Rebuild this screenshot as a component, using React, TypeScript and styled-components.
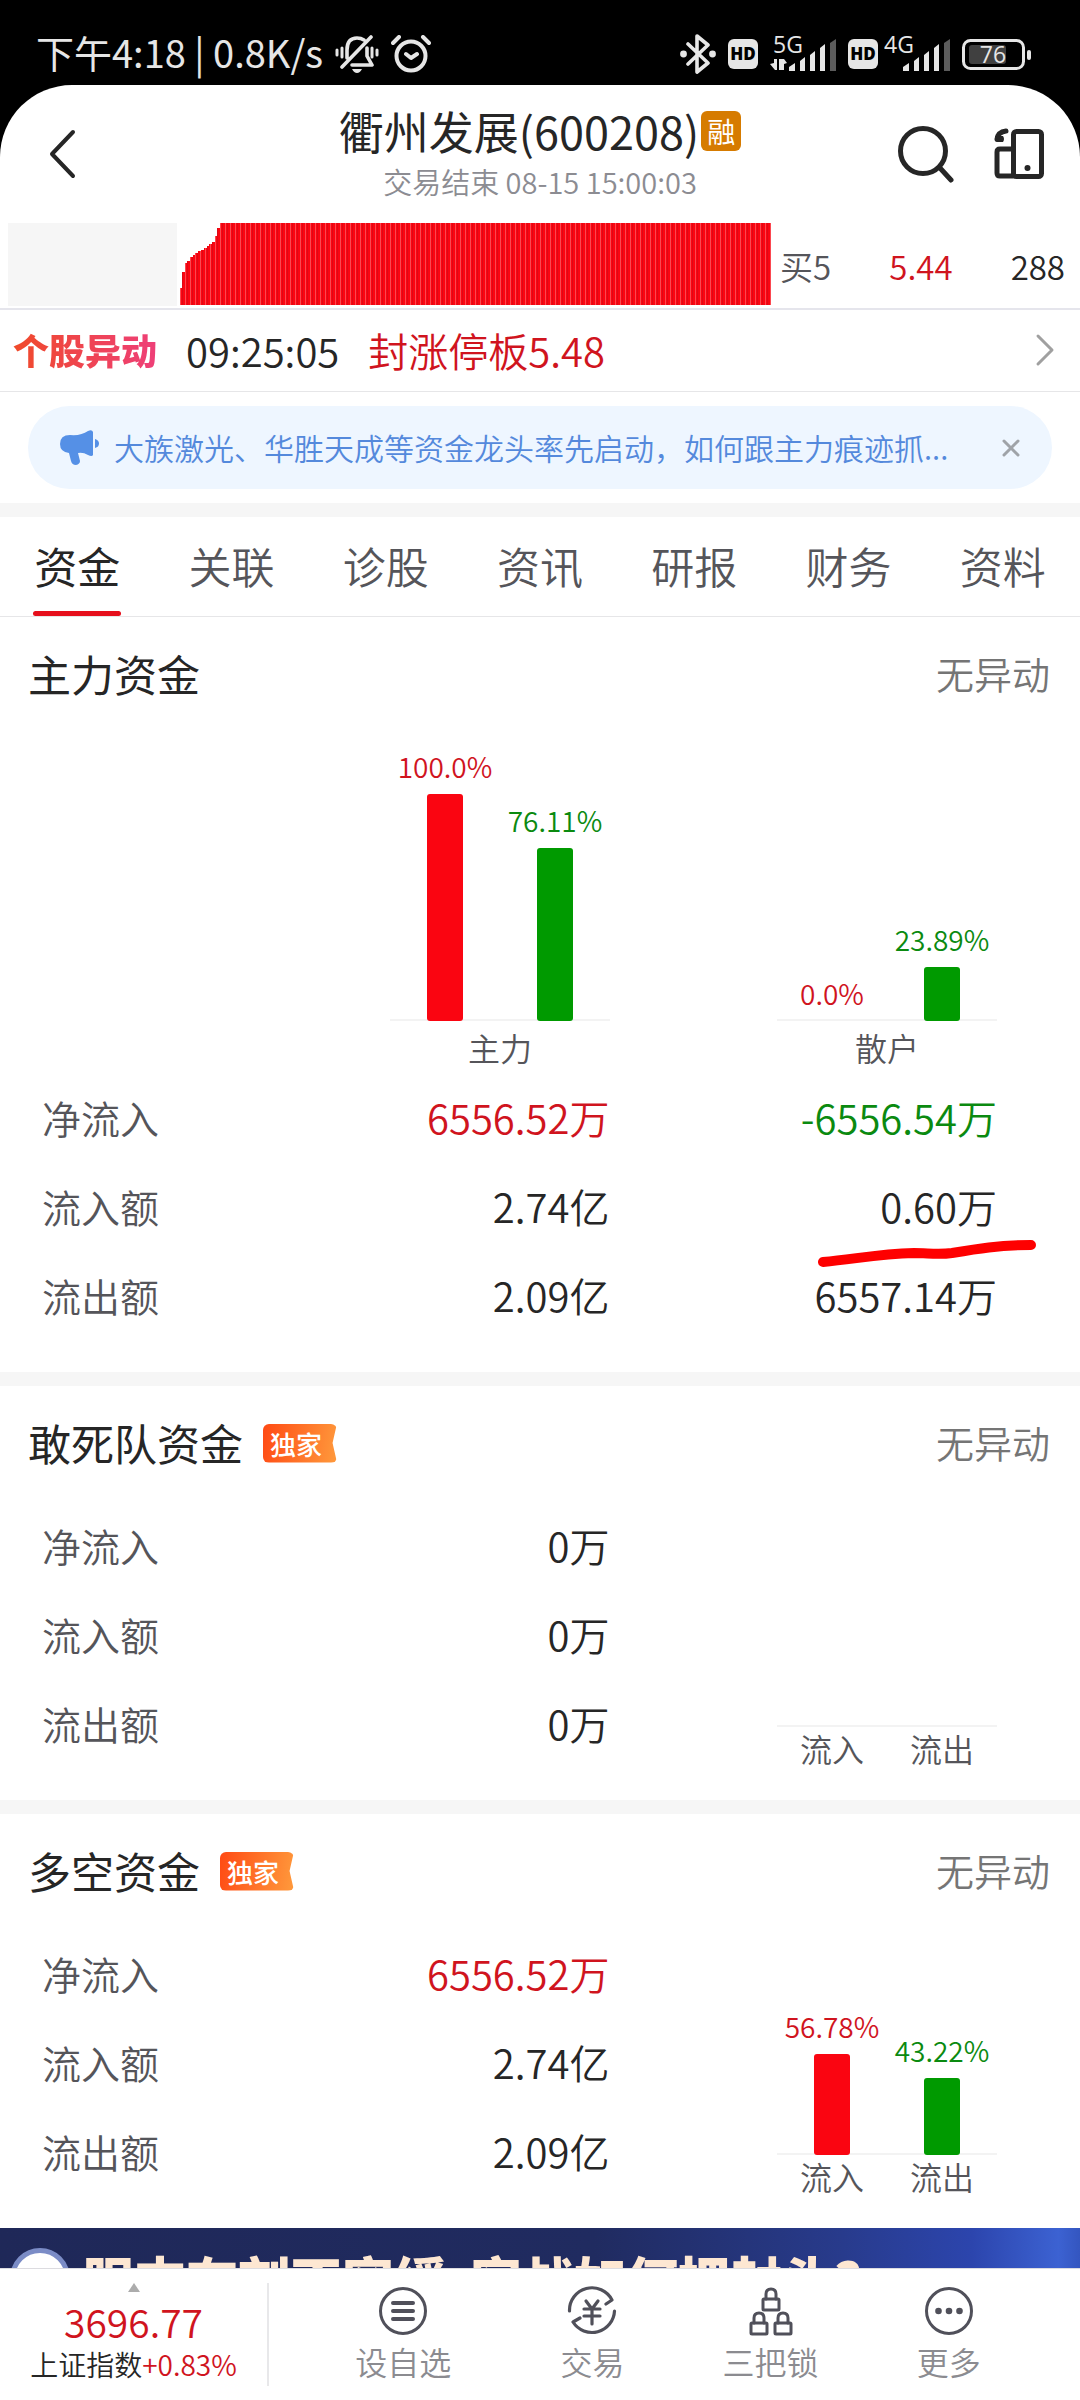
import React from 'react';

import styled, { createGlobalStyle } from 'styled-components';

const GlobalStyle = createGlobalStyle`
	* {
		box-sizing: border-box;
	}

	body {
		margin: 0;
		background: #000;
		color: #262626;
		font-family: 'Noto Sans CJK SC', 'Open Sans', sans-serif;
		font-weight: 350;
		line-height: 1.4;
	}

	button {
		padding: 0;
		border: 0;
		background: none;
		color: inherit;
		font: inherit;
		cursor: pointer;
	}

	svg {
		display: block;
		flex-shrink: 0;
	}
`;

type Tone = 'up' | 'down' | 'plain';

const tones: Record<Tone, string> = {
	up: '#d0141e',
	down: '#0b8a10',
	plain: '#262626',
};

// Layout
const Screen = styled.div`
	display: flex;
	flex-direction: column;
	height: 100vh;
`;

const Sheet = styled.div`
	flex: 1;
	min-height: 0;
	display: flex;
	flex-direction: column;
	overflow: hidden;
	border-radius: 72px 72px 0 0;
	background: #fff;
`;

const Scroll = styled.main`
	flex: 1;
	min-height: 0;
	overflow-y: auto;
	scrollbar-width: none;
`;

// Status bar
const StatusBar = styled.div`
	display: flex;
	align-items: center;
	height: 85px;
	padding: 22px 48px 0 36px;
	color: #e6e6e6;
	font-size: 38px;
	font-weight: 400;
	line-height: 48px;
	white-space: nowrap;
`;

const Clock = styled.span`
	padding-bottom: 4px;
`;

const StatusGroup = styled.div<{ $gap: number }>`
	display: flex;
	align-items: center;
	gap: ${p => p.$gap}px;
`;

const Spacer = styled.div`
	flex-grow: 1;
`;

const Hd = styled.span`
	width: 30px;
	border-radius: 6px;
	background: #e6e6e6;
	color: #000;
	font-family: 'Open Sans', sans-serif;
	font-size: 17px;
	font-weight: 800;
	line-height: 30px;
	text-align: center;
`;

// Title bar
const Header = styled.header`
	display: flex;
	align-items: center;
	justify-content: space-between;
	height: 138px;
	flex-shrink: 0;
	padding: 0 36px;
`;

const HeaderSide = styled.div<{ $end?: boolean }>`
	display: flex;
	justify-content: ${p => (p.$end ? 'flex-end' : 'flex-start')};
	gap: 40px;
	width: 160px;
`;

const Heading = styled.div`
	padding-top: 4px;
	text-align: center;
	white-space: nowrap;
`;

const Title = styled.h1`
	display: flex;
	align-items: center;
	justify-content: center;
	gap: 2px;
	margin: 0;
	font-size: 45px;
	font-weight: 400;
	line-height: 50px;
`;

const MarginTag = styled.span`
	width: 40px;
	border-radius: 6px;
	background: #d67b00;
	color: #fff;
	font-size: 28px;
	line-height: 40px;
	text-align: center;
`;

const Session = styled.div`
	color: #8c8c92;
	font-size: 29px;
	line-height: 50px;
`;

// Order book strip
const Quote = styled.div`
	display: flex;
	align-items: flex-start;
	height: 87px;
	flex-shrink: 0;
	padding-left: 8px;
	border-bottom: 2px solid #e5e5ec;
`;

const Asks = styled.div`
	flex: 169 0 0;
	height: 83px;
	margin-right: 3px;
	background: #f6f6f6;
`;

const Depth = styled.div`
	flex: 591 0 0;
`;

const BidRow = styled.div`
	flex: 285 0 0;
	display: flex;
	justify-content: space-between;
	padding: 0 15px 0 9px;
	font-size: 33px;
	line-height: 87px;
`;

const Muted = styled.span`
	color: #55555a;
`;

const Amount = styled.span<{ $tone: Tone }>`
	color: ${p => tones[p.$tone]};
`;

// Alert line
const Alert = styled.a`
	display: flex;
	align-items: center;
	gap: 29px;
	height: 82px;
	flex-shrink: 0;
	padding: 0 25px 2px 13px;
	border-bottom: 1px solid #e6e6e8;
	color: inherit;
	font-size: 40px;
	text-decoration: none;
`;

const AlertName = styled.b`
	background: linear-gradient(90deg, #f04a2a, #ee3f78);
	background-clip: text;
	color: transparent;
	font-size: 36px;
	font-weight: 900;
`;

const NoticeWrap = styled.div`
	padding: 14px 28px;
	border-bottom: 14px solid #f6f6f6;
	flex-shrink: 0;
`;

const Notice = styled.div`
	display: flex;
	align-items: center;
	height: 83px;
	padding: 0 32px;
	border-radius: 42px;
	background: #eef6ff;
	color: #5489dc;
	font-size: 30px;
`;

const NoticeText = styled.span`
	flex: 1;
	margin: 0 40px 0 14px;
	padding-bottom: 2px;
	overflow: hidden;
	text-overflow: ellipsis;
	white-space: nowrap;
`;

// Tabs
const Tabs = styled.nav`
	display: flex;
	height: 100px;
	flex-shrink: 0;
	border-bottom: 1px solid #e6e6e8;
`;

const Tab = styled.button<{ $active?: boolean }>`
	flex: 1;
	display: flex;
	flex-direction: column;
	align-items: center;
	color: ${p => (p.$active ? '#262626' : '#55555a')};
	font-size: 43px;
	font-weight: ${p => (p.$active ? 400 : 350)};
	line-height: 96px;

	&::after {
		content: '';
		width: 88px;
		height: 5px;
		margin-top: -2px;
		border-radius: 3px;
		background: ${p => (p.$active ? '#e60f1c' : 'transparent')};
	}
`;

// Sections
const Section = styled.section`
	padding-bottom: 31px;

	& + & {
		border-top: 14px solid #f6f6f6;
	}
`;

const SectionHead = styled.div`
	display: flex;
	align-items: center;
	height: 116px;
	padding: 0 30px 4px 28px;
`;

const SectionTitle = styled.h2`
	margin: 0;
	font-size: 43px;
	font-weight: 400;
`;

const Exclusive = styled.span`
	width: 74px;
	margin: 2px 0 0 20px;
	padding-left: 7px;
	border-radius: 6px;
	background: linear-gradient(100deg, #ff4a14, #ff9a3c);
	clip-path: polygon(0 0, 100% 0, 94% 50%, 100% 100%, 0 100%);
	color: #fff;
	font-size: 26px;
	font-weight: 500;
	line-height: 39px;
`;

const State = styled.span`
	margin-left: auto;
	color: #757575;
	font-size: 38px;
`;

const ChartRow = styled.div`
	display: grid;
	grid-template-columns: 180px 1fr 1fr;
	align-items: end;
	justify-items: end;
	height: 341px;
	padding: 0 83px 0 43px;
`;

const Plot = styled.div`
	width: 220px;
	margin-left: auto;
	color: #55555a;
	font-size: 32px;
	text-align: center;
`;

const Bars = styled.div`
	display: grid;
	grid-template-columns: 1fr 1fr;
	align-items: end;
	background: linear-gradient(#f3f3f3, #f3f3f3) bottom / 100% 2px no-repeat;
	min-height: 2px;
`;

const BarSlot = styled.div<{ $tone: Tone }>`
	display: flex;
	flex-direction: column;
	align-items: center;
	gap: 10px;
	color: ${p => tones[p.$tone]};
	font-size: 28px;
	line-height: 36px;
`;

const Bar = styled.div<{ $tone: Tone }>`
	width: 36px;
	border-radius: 3px;
	background: ${p => (p.$tone === 'up' ? '#fa0511' : '#009a00')};
`;

const PlotNames = styled.div<{ $height: number }>`
	display: flex;
	line-height: ${p => p.$height}px;

	span {
		flex: 1;
	}
`;

const TableWrap = styled.div`
	padding: 0 83px 0 42px;
`;

const Table = styled.table`
	width: 100%;
	table-layout: fixed;
	border-collapse: collapse;
	line-height: 52px;

	th {
		width: 180px;
		color: #55555a;
		font-size: 39px;
		font-weight: 350;
		text-align: left;
		white-space: nowrap;
	}

	th,
	td {
		height: 89px;
		padding: 0 0 4px;
	}
`;

const Cell = styled.td<{ $tone: Tone }>`
	position: relative;
	color: ${p => tones[p.$tone]};
	font-size: 40px;
	text-align: right;
`;

const PlotCell = styled.td`
	&& {
		padding: 0;
	}

	vertical-align: bottom;
`;

// Hand-drawn marker under a value
const Marker = styled.svg`
	position: absolute;
	right: -41px;
	bottom: -17px;
`;

// Banner
const Banner = styled.a`
	display: flex;
	align-items: flex-start;
	gap: 24px;
	height: 160px;
	padding: 20px 10px;
	overflow: hidden;
	background: linear-gradient(90deg, #1f2858 0%, #202b60 55%, #283b8c 78%, #2c45ad 90%, #3c62d2 98%, #3456c0 100%);
	color: #fde7d2;
	font-size: 52px;
	font-weight: 900;
	line-height: 62px;
	text-decoration: none;
	white-space: nowrap;
`;

const Avatar = styled.span`
	width: 60px;
	height: 60px;
	flex-shrink: 0;
	margin-right: -12px;
	border: 5px solid #7b8cc6;
	border-radius: 50%;
	background: #fff;
`;

// Bottom bar
const BottomBar = styled.footer`
	display: flex;
	align-items: center;
	height: 132px;
	flex-shrink: 0;
	border-top: 1px solid #dcdce0;
	background: #fff;
`;

const Index = styled.button`
	display: flex;
	flex-direction: column;
	align-items: center;
	width: 269px;
	height: 103px;
	border-right: 2px solid #e8e8ea;
	white-space: nowrap;
`;

const IndexValue = styled.span`
	margin-top: 7px;
	color: ${tones.up};
	font-size: 39px;
	line-height: 44px;
`;

const IndexName = styled.span`
	font-size: 28px;
	line-height: 42px;
`;

const Actions = styled.nav`
	flex: 1;
	display: grid;
	grid-template-columns: 200fr repeat(3, 178fr);
	padding: 0 42px 0 34px;
`;

const Action = styled.button`
	display: flex;
	flex-direction: column;
	align-items: center;
	gap: 3px;
	color: #8b8b90;
	font-size: 32px;
	line-height: 44px;

	svg {
		color: #50505a;
	}
`;

const Line = (props: React.SVGProps<SVGSVGElement>) => (
	<svg fill="none" stroke="currentColor" strokeLinecap="round" strokeLinejoin="round" aria-hidden="true" {...props} />
);

const MutedBell = () => (
	<Line width="44" height="38" viewBox="0 0 44 38" strokeWidth="3.6">
		<path d="M12 23V15Q12 3 22 3Q26 3 29 5M32 13v8l5 9H17M36 2L7 32" />
		<path d="M7 13v9M37 13v9" strokeWidth="3" />
		<path d="M2 15v5M42 15v5" strokeWidth="3" />
		<path d="M17 34h10q-2 4-5 4t-5-4z" fill="currentColor" stroke="none" />
	</Line>
);

const Alarm = () => (
	<Line width="40" height="38" viewBox="0 0 40 38" strokeWidth="4">
		<circle cx="20" cy="21" r="14.5" />
		<path d="M15 19l5 4 6-4M2 8l6-6M38 8l-6-6" />
	</Line>
);

const Bluetooth = () => (
	<Line width="36" height="40" viewBox="0 0 36 40" strokeWidth="3.6">
		<path d="M8 10l20 19-11 9V2l11 9L8 30" />
		<circle cx="3.5" cy="20" r="3.4" fill="currentColor" stroke="none" />
		<circle cx="32.5" cy="20" r="3.4" fill="currentColor" stroke="none" />
	</Line>
);

const Signal = ({ label, data }: { label: string; data?: boolean }) => (
	<svg width="66" height="54" viewBox="0 -8 66 54" fill="currentColor" aria-hidden="true">
		<text x={data ? 3 : 0} y="18" fontSize="23" fontFamily="Open Sans">{label}</text>
		{data && <path d="M0 29l4-1v-4h3v11H5zM9 24h3v11H9zM12 24h2l3 4-3 1v6h-2z" />}
		<path d="M19 32l6-4v8h-6zM30 26l5-4v14h-5zM40 20l5-4v20h-5zM50 13l5-4v27h-5z" />
		<path d="M60 8l6-4v32h-6z" opacity=".4" />
	</svg>
);

const Battery = () => (
	<svg width="70" height="32" viewBox="0 0 70 32" fill="currentColor" aria-hidden="true">
		<rect x="1.500" y="2.500" width="60" height="28" rx="7" fill="none" stroke="currentColor" strokeWidth="3" />
		<rect x="7" y="7" width="37" height="19" rx="3" opacity=".28" />
		<rect x="65" y="12" width="4" height="10" rx="2" />
		<text x="31" y="25" fontSize="23" textAnchor="middle" fontFamily="Open Sans">76</text>
	</svg>
);

const BackIcon = () => (
	<Line width="56" height="56" viewBox="0 0 56 56" strokeWidth="4">
		<path d="M37 6L16 28l21 22" />
	</Line>
);

const SearchIcon = () => (
	<Line width="56" height="58" viewBox="0 0 56 58" strokeWidth="5">
		<circle cx="25" cy="26" r="22.500" />
		<path d="M42 43l11 12" />
	</Line>
);

const RotateIcon = () => (
	<Line width="50" height="54" viewBox="0 0 50 54" strokeWidth="5">
		<rect x="19.500" y="4.500" width="28" height="45" rx="3" />
		<path d="M19 22H6q-3 0-3 3v21q0 3 3 3h13" />
		<path d="M3 12Q4 5 12 4" />
		<path d="M1 9v4q0 2 2 2h6q2-3 0-6z" fill="currentColor" stroke="none" />
		<circle cx="33.500" cy="41" r="3" fill="currentColor" stroke="none" />
	</Line>
);

const Megaphone = () => (
	<svg width="40" height="36" viewBox="0 0 40 36" fill="#5590e6" aria-hidden="true">
		<path d="M10 5q11 1 18-4 4-2 5 1v23q-1 2-5 0-5-3-10-2l2 8q0 3-4 4-4 0-5-4l-2-8Q0 22 0 14 0 5 10 5z" />
		<path d="M35 9q4 1 4 4.500t-4 4.500z" />
	</svg>
);

const DepthChart = () => (
	<svg width="100%" height="82" viewBox="0 0 591 82" preserveAspectRatio="none" aria-hidden="true">
		<defs>
			<pattern id="bids" width="5" height="82" patternUnits="userSpaceOnUse">
				<rect width="5" height="82" fill="#fb0511" />
				<rect width="1" height="82" fill="#fb4850" />
				<rect x="2" width="1" height="82" fill="#dc0a16" />
			</pattern>
		</defs>
		<path
			fill="url(#bids)"
			d="M0 82V65h2V49h3v-9h2v-2h3v-4h3v-2h2v-2h3v-2h3v-1h3v-2h3v-2h2v-2h3v-2h3v-6h2V5h3V0H591V82z"
		/>
	</svg>
);

const ListIcon = () => (
	<Line width="50" height="50" viewBox="0 0 50 50" strokeWidth="3">
		<circle cx="25" cy="25" r="22.500" />
		<path d="M15 17h20M15 25h20M15 33h20" strokeWidth="4" />
	</Line>
);

const TradeIcon = () => (
	<Line width="50" height="50" viewBox="0 0 50 50" strokeWidth="3.200">
		<path d="M2.500 25A22.500 22.500 0 0 1 45 14l-6 4M47.500 25A22.500 22.500 0 0 1 6 36l7-4" />
		<path d="M19 15l6 8 6-8M17 23h16M17 30h16M25 23v15" />
	</Line>
);

const LocksIcon = () => (
	<Line width="50" height="50" viewBox="0 0 50 50" strokeWidth="3">
		<rect x="17" y="13" width="16" height="11" rx="1" />
		<path d="M20 13V8q0-5 5-5t5 5v5" />
		<rect x="5" y="37" width="16" height="11" rx="1" />
		<path d="M8 37v-5q0-5 5-5t5 5v5" />
		<rect x="29" y="37" width="16" height="11" rx="1" />
		<path d="M32 37v-5q0-5 5-5t5 5v5" />
	</Line>
);

const MoreIcon = () => (
	<Line width="50" height="50" viewBox="0 0 50 50" strokeWidth="3">
		<circle cx="25" cy="25" r="22.500" />
		<g fill="currentColor" stroke="none">
			<circle cx="14.500" cy="25" r="3.300" />
			<circle cx="25" cy="25" r="3.300" />
			<circle cx="35.500" cy="25" r="3.300" />
		</g>
	</Line>
);

interface PlotBar {
	tone: Tone;
	percent: string;
	height: number;
}

interface FlowPlotProps {
	bars: PlotBar[];
	names: string[];
	nameHeight: number;
}

const FlowPlot = ({ bars, names, nameHeight }: FlowPlotProps) => (
	<Plot>
		<Bars>
			{bars.map(bar => (
				<BarSlot key={bar.tone} $tone={bar.tone}>
					{bar.percent}
					<Bar $tone={bar.tone} style={{ height: bar.height }} />
				</BarSlot>
			))}
		</Bars>
		<PlotNames $height={nameHeight}>
			{names.map(name => (
				<span key={name}>{name}</span>
			))}
		</PlotNames>
	</Plot>
);

interface FlowRow {
	name: string;
	values: [string, Tone][];
	marked?: boolean;
}

const FlowTable = ({ rows, children }: { rows: FlowRow[]; children?: React.ReactNode }) => (
	<TableWrap>
		<Table>
			<tbody>
				{rows.map((row, i) => (
					<tr key={row.name}>
						<th scope="row">{row.name}</th>
						{row.values.map(([value, tone], col) => (
							<Cell key={col} $tone={tone}>
								{value}
								{row.marked && col === 1 && (
									<Marker width="222" height="32" viewBox="0 0 222 32" aria-hidden="true">
										<path
											d="M7 25C40 22 62 17 98 16C112 16 122 18 136 16C160 12 184 8 215 8"
											fill="none"
											stroke="#fe0000"
											strokeWidth="10"
											strokeLinecap="round"
										/>
									</Marker>
								)}
							</Cell>
						))}
						{i === 0 && children && <PlotCell rowSpan={rows.length}>{children}</PlotCell>}
					</tr>
				))}
			</tbody>
		</Table>
	</TableWrap>
);

const tabs = ['资金', '关联', '诊股', '资讯', '研报', '财务', '资料'];

const mainRows: FlowRow[] = [
	{ name: '净流入', values: [['6556.52万', 'up'], ['-6556.54万', 'down']] },
	{ name: '流入额', values: [['2.74亿', 'plain'], ['0.60万', 'plain']], marked: true },
	{ name: '流出额', values: [['2.09亿', 'plain'], ['6557.14万', 'plain']] },
];

const squadRows: FlowRow[] = [
	{ name: '净流入', values: [['0万', 'plain']] },
	{ name: '流入额', values: [['0万', 'plain']] },
	{ name: '流出额', values: [['0万', 'plain']] },
];

const longShortRows: FlowRow[] = [
	{ name: '净流入', values: [['6556.52万', 'up']] },
	{ name: '流入额', values: [['2.74亿', 'plain']] },
	{ name: '流出额', values: [['2.09亿', 'plain']] },
];

const actions = [
	{ name: '设自选', icon: <ListIcon /> },
	{ name: '交易', icon: <TradeIcon /> },
	{ name: '三把锁', icon: <LocksIcon /> },
	{ name: '更多', icon: <MoreIcon /> },
];

export default function App() {
	return (
		<Screen>
			<GlobalStyle />
			<StatusBar>
				<StatusGroup $gap={12}>
					<Clock>下午4:18 | 0.8K/s</Clock>
					<MutedBell />
					<Alarm />
				</StatusGroup>
				<Spacer />
				<StatusGroup $gap={12}>
					<Bluetooth />
					<Hd>HD</Hd>
					<Signal label="5G" data />
					<StatusGroup $gap={6}>
						<Hd>HD</Hd>
						<Signal label="4G" />
					</StatusGroup>
					<Battery />
				</StatusGroup>
			</StatusBar>

			<Sheet>
				<Header>
					<HeaderSide>
						<button aria-label="返回">
							<BackIcon />
						</button>
					</HeaderSide>
					<Heading>
						<Title>
							衢州发展(600208)
							<MarginTag>融</MarginTag>
						</Title>
						<Session>交易结束 08-15 15:00:03</Session>
					</Heading>
					<HeaderSide $end>
						<button aria-label="搜索">
							<SearchIcon />
						</button>
						<button aria-label="横屏">
							<RotateIcon />
						</button>
					</HeaderSide>
				</Header>

				<Quote>
					<Asks />
					<Depth>
						<DepthChart />
					</Depth>
					<BidRow>
						<Muted>买5</Muted>
						<Amount $tone="up">5.44</Amount>
						<Amount $tone="plain">288</Amount>
					</BidRow>
				</Quote>

				<Alert href="#alerts">
					<AlertName>个股异动</AlertName>
					<span>09:25:05</span>
					<Amount $tone="up">封涨停板5.48</Amount>
					<Spacer />
					<Line width="20" height="34" viewBox="0 0 20 34" stroke="#a0a0a0" strokeWidth="3">
						<path d="M3 3l14 14L3 31" />
					</Line>
				</Alert>

				<NoticeWrap>
					<Notice>
						<Megaphone />
						<NoticeText>大族激光、华胜天成等资金龙头率先启动，如何跟主力痕迹抓...</NoticeText>
						<button aria-label="关闭">
							<Line width="18" height="18" viewBox="0 0 18 18" stroke="#9fa3a8" strokeWidth="3">
								<path d="M2 2l14 14M16 2L2 16" />
							</Line>
						</button>
					</Notice>
				</NoticeWrap>

				<Tabs>
					{tabs.map((tab, i) => (
						<Tab key={tab} $active={i === 0}>
							{tab}
						</Tab>
					))}
				</Tabs>

				<Scroll>
					<Section>
						<SectionHead>
							<SectionTitle>主力资金</SectionTitle>
							<State>无异动</State>
						</SectionHead>
						<ChartRow>
							<span />
							<FlowPlot
								names={['主力']}
								nameHeight={53}
								bars={[
									{ tone: 'up', percent: '100.0%', height: 227 },
									{ tone: 'down', percent: '76.11%', height: 173 },
								]}
							/>
							<FlowPlot
								names={['散户']}
								nameHeight={53}
								bars={[
									{ tone: 'up', percent: '0.0%', height: 0 },
									{ tone: 'down', percent: '23.89%', height: 54 },
								]}
							/>
						</ChartRow>
						<FlowTable rows={mainRows} />
					</Section>

					<Section>
						<SectionHead>
							<SectionTitle>敢死队资金</SectionTitle>
							<Exclusive>独家</Exclusive>
							<State>无异动</State>
						</SectionHead>
						<FlowTable rows={squadRows}>
							<FlowPlot names={['流入', '流出']} nameHeight={42} bars={[]} />
						</FlowTable>
					</Section>

					<Section>
						<SectionHead>
							<SectionTitle>多空资金</SectionTitle>
							<Exclusive>独家</Exclusive>
							<State>无异动</State>
						</SectionHead>
						<FlowTable rows={longShortRows}>
							<FlowPlot
								names={['流入', '流出']}
								nameHeight={42}
								bars={[
									{ tone: 'up', percent: '56.78%', height: 101 },
									{ tone: 'down', percent: '43.22%', height: 77 },
								]}
							/>
						</FlowTable>
					</Section>

					<Banner href="#banner">
						<Avatar />
						<span>服末在刻不容缓</span>
						<span>实战如何把封头?</span>
					</Banner>
				</Scroll>

				<BottomBar>
					<Index>
						<svg width="12" height="9" viewBox="0 0 12 9" fill="#acacac" aria-hidden="true">
							<path d="M6 0l6 9H0z" />
						</svg>
						<IndexValue>3696.77</IndexValue>
						<IndexName>
							上证指数<Amount $tone="up">+0.83%</Amount>
						</IndexName>
					</Index>
					<Actions>
						{actions.map(action => (
							<Action key={action.name}>
								{action.icon}
								{action.name}
							</Action>
						))}
					</Actions>
				</BottomBar>
			</Sheet>
		</Screen>
	);
}
